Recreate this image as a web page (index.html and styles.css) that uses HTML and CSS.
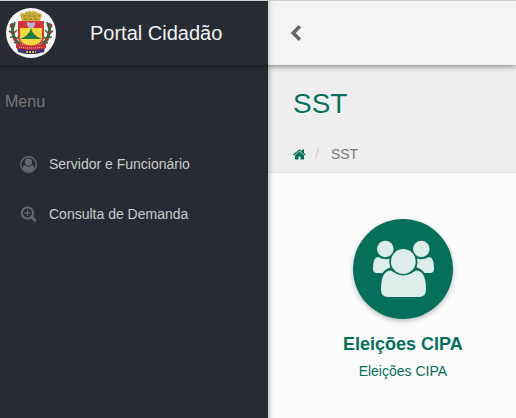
FILE: index.html
```html
<!DOCTYPE html>
<html lang="pt-br">
<head>
    <meta charset="utf-8">
    <meta name="viewport" content="width=device-width, initial-scale=1">
    <title>Portal Cidadão</title>
    <link rel="stylesheet" href="styles.css">
</head>
<body>
    <header class="topbar">
        <a href="#" class="brand">
            <svg class="crest" viewBox="0 0 50 50">
                <circle cx="25" cy="25" r="25" fill="#f6f6f6"/>
                <!-- crown -->
                <path d="M16 13 14 6l4-1 1 1V4l5-1 1 1 2-1 4 1v2l1-1 4 1-2 7z" fill="#c9ab35"/>
                <path d="M17 8h17M18 11h15" stroke="#8f7528" stroke-width="1" stroke-dasharray="3 2"/>
                <!-- branches -->
                <path d="M7 15q-3 14 8 23M43 15q3 14-8 23" fill="none" stroke="#2f6b3f" stroke-width="3"/>
                <path d="M4 18l4 3M3 23l5 3M4 29l6 1M8 35l5-1M9 14l-1 5M11 22l-4 4M12 29l-3 3M46 18l-4 3M47 23l-5 3M46 29l-6 1M42 35l-5-1M41 14l1 5M39 22l4 4M38 29l3 3" stroke="#2f6b3f" stroke-width="1.600"/>
                <path d="M5 16v3M6 23v3M8 30l1 3M11 35l2 2M45 16v3M44 23v3M42 30l-1 3M39 35l-2 2" stroke="#d0242c" stroke-width="2.200"/>
                <!-- shield -->
                <path d="M12 13h26v17q0 7-13 10-13-3-13-10z" fill="#d8323a"/>
                <path d="M14 20h22v10q0 6-11 8-11-2-11-8z" fill="#f7d83c"/>
                <path d="M21 14l4 1 4-1v3l-2 3h-4l-2-3z" fill="#b9b4d4"/>
                <path d="M14 31q9-3 11-11 2 8 11 11z" fill="#1f7a45"/>
                <!-- ribbon -->
                <path d="M11 39l7 2 7-1 7 1 7-2-1 5-8 2H20l-8-2z" fill="#40316f"/>
                <path d="M10 36q15 3 30 0v4q-15 4-30 0z" fill="#c92f39"/>
                <path d="M13 39q12 2 24 0" fill="none" stroke="#f3cbc9" stroke-width="1" stroke-dasharray="1 1"/>
                <path d="M20 44h10" stroke="#d5b243" stroke-width="2" stroke-dasharray="2 1"/>
            </svg>
            <span class="brand-name">Portal Cidadão</span>
        </a>
        <div class="toolbar">
            <button type="button" class="toggle" aria-label="Recolher menu">
                <svg viewBox="0 0 12 18"><path d="M9.500 3 3.500 9l6 6" fill="none" stroke="currentColor" stroke-width="3.200"/></svg>
            </button>
        </div>
    </header>

    <div class="wrapper">
        <nav class="sidebar">
            <h2 class="menu-title">Menu</h2>
            <ul class="menu">
                <li>
                    <a href="#">
                        <svg class="menu-icon" viewBox="0 0 1792 1792">
                            <circle cx="896" cy="896" r="820" fill="none" stroke="currentColor" stroke-width="150"/>
                            <circle cx="896" cy="640" r="384" fill="currentColor"/>
                            <path fill="currentColor" d="M1523 1339q-22-155-87.500-257.500t-184.500-118.500q-67 74-159.500 115.500t-195.500 41.500-195.500-41.500-159.500-115.500q-119 16-184.500 118.500t-87.500 257.500q106 150 271 237.500t356 87.500 356-87.500 271-237.500z"/>
                        </svg>
                        Servidor e Funcionário
                    </a>
                </li>
                <li>
                    <a href="#">
                        <svg class="menu-icon" viewBox="0 0 17 17">
                            <g fill="none" stroke="currentColor">
                                <circle cx="7.500" cy="7" r="5.600" stroke-width="2.200"/>
                                <path d="M4.500 7h6M7.500 4v6" stroke-width="1.300"/>
                                <path d="M11.800 11.300l3.200 3.200" stroke-width="2.800" stroke-linecap="round"/>
                            </g>
                        </svg>
                        Consulta de Demanda
                    </a>
                </li>
            </ul>
        </nav>

        <main class="content">
            <div class="page-header">
                <h1>SST</h1>
                <ol class="breadcrumb">
                    <li>
                        <a href="#" aria-label="Início">
                            <svg viewBox="64 192 1664 1408"><path fill="currentColor" d="M1472 992v480q0 26-19 45t-45 19h-384v-384h-256v384h-384q-26 0-45-19t-19-45v-480q0-1 .5-3t.5-3l575-474 575 474q1 2 1 6zm223-69l-62 74q-8 9-21 11h-3q-13 0-21-7l-692-577-692 577q-12 8-24 7-13-2-21-11l-62-74q-8-10-7-23.500t11-21.500l719-599q32-26 76-26t76 26l244 204v-195q0-14 9-23t23-9h192q14 0 23 9t9 23v408l219 182q10 8 11 21.500t-7 23.500z"/></svg>
                        </a>
                    </li>
                    <li>SST</li>
                </ol>
            </div>
            <div class="cards">
                <a href="#" class="card">
                    <span class="card-icon">
                        <svg viewBox="0 0 100 100">
                            <g fill="#deede9">
                                <circle cx="32.300" cy="30" r="8.300"/>
                                <circle cx="68.300" cy="30" r="8.300"/>
                                <path d="M25 38q7 3.500 12 1.500-1 5 .5 9-5 1-8 5.500H24q-4 0-4-4 0-12 5-12z"/>
                                <path d="M76 38q-7 3.500-12 1.500 1 5-.5 9 5 1 8 5.500H77q4 0 4-4 0-12-5-12z"/>
                                <path d="M38 51.500q12.300 9 25 0 10 0 10 19 0 7.500-7 7.500H35q-7 0-7-7.500 0-19 10-19z"/>
                                <circle cx="50.300" cy="42.500" r="13.200" stroke="#04705a" stroke-width="1.500"/>
                            </g>
                        </svg>
                    </span>
                    <strong class="card-title">Eleições CIPA</strong>
                    <span class="card-text">Eleições CIPA</span>
                </a>
            </div>
        </main>
    </div>
</body>
</html>
```

FILE: styles.css
```css
* {
    box-sizing: border-box;
}
body {
    margin: 0;
    min-height: 100vh;
    display: flex;
    flex-direction: column;
    font-family: "Liberation Sans", Arial, sans-serif;
    font-size: 14px;
    line-height: 20px;
    color: #777;
    background: #fbfbfb;
}
a {
    color: #04705a;
    text-decoration: none;
}
ul, ol {
    margin: 0;
    padding: 0;
    list-style: none;
}

/* top bar */
.topbar {
    position: relative;
    z-index: 2;
    display: flex;
    height: 65px;
    border-top: 1px solid #c9cfca;
    box-shadow: 0 1px 6px rgba(0, 0, 0, 0.5);
}
.brand {
    display: flex;
    flex: 0 0 268px;
    align-items: center;
    padding-left: 6px;
    background: #272b33;
}
.crest {
    width: 50px;
    height: 50px;
}
.brand-name {
    margin-left: 34px;
    font-size: 20px;
    color: #f2f2f2;
}
.toolbar {
    display: flex;
    flex: 1;
    align-items: center;
    padding-left: 21px;
    background: #f4f4f4;
    box-shadow: inset 5px 0 5px -4px rgba(0, 0, 0, 0.2);
}
.toggle {
    display: flex;
    padding: 0;
    border: 0;
    background: none;
    color: #666;
    cursor: pointer;
}
.toggle svg {
    width: 14px;
    height: 20px;
}

/* sidebar */
.wrapper {
    display: flex;
    flex: 1;
}
.sidebar {
    position: relative;
    z-index: 1;
    flex: 0 0 268px;
    background: #272b33;
    box-shadow: 0 0 6px rgba(0, 0, 0, 0.4);
}
.menu-title {
    margin: 27px 5px;
    font-size: 16px;
    font-weight: normal;
    color: #777;
}
.menu a {
    display: flex;
    align-items: center;
    gap: 12px;
    height: 50px;
    padding-left: 20px;
    color: #ccc;
}
.menu-icon {
    width: 17px;
    height: 17px;
    color: #636770;
}

/* content */
.content {
    flex: 1;
}
.page-header {
    padding: 22px 25px 8px;
    background: #eee;
    border-bottom: 1px solid #e2e2e2;
}
.page-header h1 {
    margin: 0 0 23px;
    font-size: 28px;
    font-weight: normal;
    line-height: 34px;
    color: #04705a;
    text-shadow: 1px 1px 1px #fff;
}
.breadcrumb {
    display: flex;
}
.breadcrumb li + li::before {
    content: "/";
    padding: 0 12px 0 9px;
    color: #ccc;
}
.breadcrumb a {
    display: flex;
    align-items: center;
    height: 20px;
}
.breadcrumb svg {
    width: 13px;
    height: 11px;
}
.cards {
    display: flex;
    padding: 46px 75px;
}
.card {
    display: flex;
    flex-direction: column;
    align-items: center;
    white-space: nowrap;
}
.card-icon {
    width: 100px;
    height: 100px;
    border-radius: 50%;
    background: #04705a;
    box-shadow: 0 2px 5px rgba(0, 0, 0, 0.25);
}
.card-title {
    margin: 15px 0 7px;
    font-size: 18px;
}
```
